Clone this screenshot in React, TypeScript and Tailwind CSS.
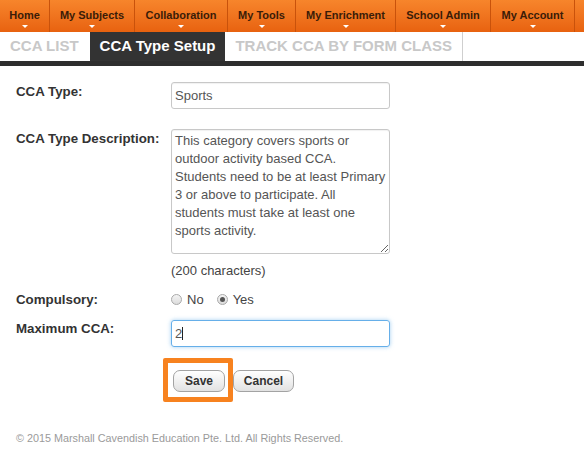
import { useState } from "react";

const navItems = [
    { label: "Home", w: "w-[50px]" },
    { label: "My Subjects", w: "w-[85px]" },
    { label: "Collaboration", w: "w-[93px]" },
    { label: "My Tools", w: "w-[68px]" },
    { label: "My Enrichment", w: "w-[100px]" },
    { label: "School Admin", w: "w-[95px]" },
    { label: "My Account", w: "w-[84px]" },
];

const description =
    "This category covers sports or outdoor activity based CCA. Students need to be at least Primary 3 or above to participate. All students must take at least one sports activity.";

const Radio = ({ checked, label, onClick }: { checked: boolean; label: string; onClick: () => void }) => (
    <label onClick={onClick} className="flex items-center cursor-pointer">
        <span className="w-[11px] h-[11px] rounded-full border border-[#a9a9a9] bg-linear-to-b from-[#f4f4f4] to-[#dcdcdc] flex items-center justify-center">
            {checked && <span className="w-[5px] h-[5px] rounded-full bg-[#555]" />}
        </span>
        <span className="ml-[5px]">{label}</span>
    </label>
);

const App = () => {
    const [compulsory, setCompulsory] = useState("yes");

    return (
        <div className="w-[584px] h-[455px] bg-white overflow-hidden font-['Liberation_Sans',Arial,sans-serif] text-[#333]">
            {/* top nav */}
            <div className="flex h-[32px] bg-linear-to-b from-[#f7852b] to-[#e8620f]">
                {navItems.map((item) => (
                    <div key={item.label} className={`${item.w} shrink-0 flex flex-col items-center pt-[9px] border-r border-[#c9520b] text-[11px] leading-[13px] font-bold text-[#3a1c08] cursor-pointer`}>
                        <span>{item.label}</span>
                        <span className="mt-[3px] w-0 h-0 border-x-[3px] border-x-transparent border-t-[3px] border-t-white" />
                    </div>
                ))}
            </div>

            {/* tabs */}
            <div className="flex h-[29px] border-b-[5px] border-[#2e2e2e] box-content text-[15px] font-bold">
                <div className="px-[10px] flex items-center text-[#c8c8c8]">CCA LIST</div>
                <div className="px-[10px] ml-px flex items-center bg-[#333] text-white">CCA Type Setup</div>
                <div className="px-[10px] flex items-center text-[#c8c8c8] border-r border-[#cfcfcf]">TRACK CCA BY FORM CLASS</div>
            </div>

            {/* form */}
            <div className="pl-[16px] text-[13px] leading-[15px]">
                <div className="flex mt-[16px]">
                    <div className="w-[155px] pt-[2px] font-bold text-[13.3px]">CCA Type:</div>
                    <input
                        defaultValue="Sports"
                        className="w-[219px] h-[27px] px-[3px] border border-[#c8c8c8] rounded-[3px] text-[#555] outline-none shadow-[inset_0_1px_1px_rgba(0,0,0,0.06)]"
                    />
                </div>

                <div className="flex mt-[20px]">
                    <div className="w-[155px] pt-[2px] font-bold text-[13.3px]">CCA Type Description:</div>
                    <textarea
                        defaultValue={description}
                        className="w-[219px] h-[125px] pl-[3px] pr-[2px] pt-[2px] border border-[#c8c8c8] rounded-[3px] text-[#555] leading-[18px] outline-none resize-y overflow-hidden shadow-[inset_0_1px_1px_rgba(0,0,0,0.06)]"
                    />
                </div>

                <div className="ml-[155px] mt-[9px] text-[#444]">(200 characters)</div>

                <div className="flex mt-[14px]">
                    <div className="w-[155px] font-bold text-[13.3px]">Compulsory:</div>
                    <div className="flex gap-[13px] text-[#444]">
                        <Radio checked={compulsory === "no"} label="No" onClick={() => setCompulsory("no")} />
                        <Radio checked={compulsory === "yes"} label="Yes" onClick={() => setCompulsory("yes")} />
                    </div>
                </div>

                <div className="flex mt-[13px]">
                    <div className="w-[155px] pt-[1px] font-bold text-[13.3px]">Maximum CCA:</div>
                    <div className="relative">
                        <input
                            defaultValue="2"
                            className="w-[219px] h-[27px] px-[3px] border border-[#66afe9] rounded-[3px] text-[#555] outline-none shadow-[0_0_4px_rgba(102,175,233,0.6)]"
                        />
                        <span className="absolute left-[11px] top-[7px] w-px h-[13px] bg-[#222]" />
                    </div>
                </div>

                <div className="flex ml-[157px] mt-[23px] gap-[8px]">
                    <div className="relative">
                        <button className="w-[52px] h-[22px] rounded-[7px] border border-[#a3a3a3] bg-linear-to-b from-white to-[#e2e2e2] text-[12px] font-bold text-[#333]">
                            Save
                        </button>
                        <span className="absolute -left-[10px] -top-[12px] w-[70px] h-[44px] border-[5px] border-[#f7821f] rounded-[2px] pointer-events-none" />
                    </div>
                    <button className="w-[61px] h-[22px] rounded-[7px] border border-[#a3a3a3] bg-linear-to-b from-white to-[#e2e2e2] text-[12px] font-bold text-[#333]">
                        Cancel
                    </button>
                </div>
            </div>

            <div className="mt-[40px] pl-[16px] text-[10.8px] leading-[13px] text-[#9a9a9a]">
                © 2015 Marshall Cavendish Education Pte. Ltd. All Rights Reserved.
            </div>
        </div>
    );
};

export default App;
